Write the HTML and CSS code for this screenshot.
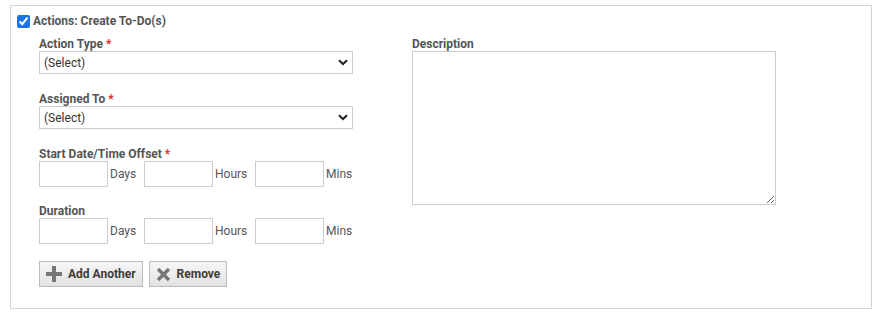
FILE: index.html
```html
<!DOCTYPE html>
<html lang="en">
<head>
    <meta charset="UTF-8">
    <title>Actions: Create To-Do(s)</title>
    <link rel="stylesheet" href="styles.css">
</head>
<body>
    <div class="action-box">
        <!-- Header -->
        <label class="box-title">
            <input type="checkbox" checked>
            <span>Actions: Create To-Do(s)</span>
        </label>

        <div class="action-body">
            <!-- Left column -->
            <div class="col-left">
                <div class="field field-select">
                    <label>Action Type <span class="req">*</span></label>
                    <div class="select-wrap">
                        <select><option>(Select)</option></select>
                        <svg class="caret" width="10" height="7" viewBox="0 0 10 7"><path d="M1 1.2 L5 5 L9 1.2" fill="none" stroke="#222" stroke-width="2"/></svg>
                    </div>
                </div>
                <div class="field field-select">
                    <label>Assigned To <span class="req">*</span></label>
                    <div class="select-wrap">
                        <select><option>(Select)</option></select>
                        <svg class="caret" width="10" height="7" viewBox="0 0 10 7"><path d="M1 1.2 L5 5 L9 1.2" fill="none" stroke="#222" stroke-width="2"/></svg>
                    </div>
                </div>
                <div class="field">
                    <label>Start Date/Time Offset <span class="req">*</span></label>
                    <div class="time-row">
                        <input type="text"><span>Days</span>
                        <input type="text"><span>Hours</span>
                        <input type="text"><span>Mins</span>
                    </div>
                </div>
                <div class="field">
                    <label>Duration</label>
                    <div class="time-row">
                        <input type="text"><span>Days</span>
                        <input type="text"><span>Hours</span>
                        <input type="text"><span>Mins</span>
                    </div>
                </div>
                <div class="buttons">
                    <button class="btn">
                        <svg width="16" height="16" viewBox="0 0 16 16"><path d="M6 0h4v6h6v4h-6v6h-4v-6h-6v-4h6z" fill="#777"/></svg>
                        Add Another
                    </button>
                    <button class="btn">
                        <svg width="15" height="15" viewBox="0 0 15 15"><path d="M2 2 L13 13 M13 2 L2 13" stroke="#777" stroke-width="3.4"/></svg>
                        Remove
                    </button>
                </div>
            </div>

            <!-- Right column -->
            <div class="col-right">
                <div class="field">
                    <label>Description</label>
                    <textarea></textarea>
                </div>
            </div>
        </div>
    </div>
</body>
</html>
```

FILE: styles.css
```css
/* Global */
* {
    box-sizing: border-box;
}

body {
    margin: 0;
    padding: 5px 10px 6px 10px;
    background: #fff;
    font-family: Roboto, "Liberation Sans", Arial, sans-serif;
    font-size: 12px;
    color: #333;
}

/* Outer box */
.action-box {
    border: 1px solid #d4d4d4;
    height: 304px;
    padding: 8px 6px 0 6px;
}

.box-title {
    display: flex;
    align-items: center;
    gap: 3px;
    font-weight: bold;
    color: #555;
    height: 14px;
}

.box-title input {
    margin: 0;
    width: 13px;
    height: 13px;
    accent-color: #1a73e8;
}

.action-body {
    display: flex;
    gap: 59px;
    padding-left: 22px;
    margin-top: 9px;
}

.col-left {
    width: 314px;
}

.col-right {
    width: 364px;
}

/* Fields */
.field {
    margin-bottom: 17px;
}

.field-select {
    margin-bottom: 18px;
}

.field label {
    display: block;
    font-weight: bold;
    color: #555;
    line-height: 14px;
}

.req {
    color: #e02424;
}

.select-wrap {
    position: relative;
}

select {
    display: block;
    width: 314px;
    height: 23px;
    border: 1px solid #ccc;
    border-radius: 0;
    background: #fff;
    font-family: inherit;
    font-size: 12px;
    color: #333;
    padding: 0 4px;
    appearance: none;
}

.caret {
    position: absolute;
    right: 5px;
    top: 8px;
}

.time-row {
    display: flex;
    align-items: center;
    height: 26px;
}

.time-row input {
    width: 69px;
    height: 26px;
    border: 1px solid #ccc;
    margin: 0;
}

.time-row span {
    color: #555;
    padding-left: 2px;
}

.time-row span:nth-of-type(1) { width: 36px; }
.time-row span:nth-of-type(2) { width: 42px; }

textarea {
    display: block;
    width: 364px;
    height: 154px;
    border: 1px solid #ccc;
    margin: 0;
    resize: both;
}

/* Buttons */
.buttons {
    display: flex;
    gap: 6px;
}

.btn {
    display: flex;
    align-items: center;
    gap: 6px;
    height: 26px;
    padding: 0 6px;
    border: 1px solid #bbb;
    background: linear-gradient(#f6f6f6, #e2e2e2);
    font-family: inherit;
    font-size: 12px;
    font-weight: bold;
    color: #3c3c3c;
    cursor: pointer;
}
```
